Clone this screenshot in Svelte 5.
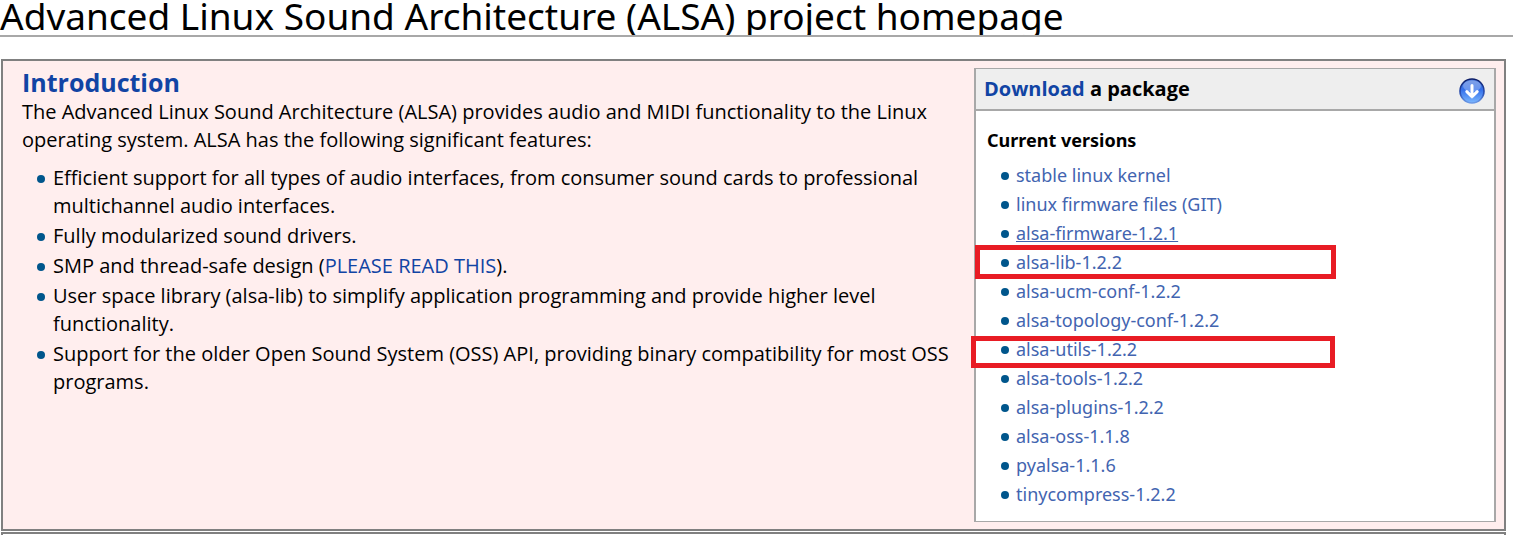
<script>
  const features = [
    { text: 'Efficient support for all types of audio interfaces, from consumer sound cards to professional multichannel audio interfaces.' },
    { text: 'Fully modularized sound drivers.' },
    { text: 'SMP and thread-safe design (', link: 'PLEASE READ THIS', after: ').' },
    { text: 'User space library (alsa-lib) to simplify application programming and provide higher level functionality.' },
    { text: 'Support for the older Open Sound System (OSS) API, providing binary compatibility for most OSS programs.' }
  ];

  const packages = [
    { name: 'stable linux kernel' },
    { name: 'linux firmware files (GIT)' },
    { name: 'alsa-firmware-1.2.1', active: true },
    { name: 'alsa-lib-1.2.2', mark: 'lib' },
    { name: 'alsa-ucm-conf-1.2.2' },
    { name: 'alsa-topology-conf-1.2.2' },
    { name: 'alsa-utils-1.2.2', mark: 'utils' },
    { name: 'alsa-tools-1.2.2' },
    { name: 'alsa-plugins-1.2.2' },
    { name: 'alsa-oss-1.1.8' },
    { name: 'pyalsa-1.1.6' },
    { name: 'tinycompress-1.2.2' }
  ];
</script>

<h1>Advanced Linux Sound Architecture (ALSA) project homepage</h1>

<main>
  <section class="intro">
    <div class="about">
      <h2><a href="#introduction">Introduction</a></h2>
      <p>
        The Advanced Linux Sound Architecture (ALSA) provides audio and MIDI functionality to the Linux
        operating system. ALSA has the following significant features:
      </p>
      <ul>
        {#each features as f}
          <li>{f.text}{#if f.link}<a href="#thread-safety">{f.link}</a>{f.after}{/if}</li>
        {/each}
      </ul>
    </div>

    <aside>
      <header>
        <h3><a href="#download">Download</a> a package</h3>
        <svg viewBox="0 0 26 26" width="26" height="26" aria-hidden="true">
          <defs>
            <linearGradient id="ball" x1="0" y1="0" x2="0" y2="1">
              <stop offset="0" stop-color="#5580dc" />
              <stop offset="0.45" stop-color="#3470ea" />
              <stop offset="1" stop-color="#7cb8ff" />
            </linearGradient>
            <linearGradient id="rim" x1="0" y1="0" x2="0" y2="1">
              <stop offset="0" stop-color="#0b1c66" />
              <stop offset="0.6" stop-color="#2a50b4" />
              <stop offset="1" stop-color="#6d9be8" />
            </linearGradient>
          </defs>
          <circle cx="13" cy="13" r="12" fill="url(#ball)" stroke="url(#rim)" stroke-width="1.6" />
          <ellipse cx="13" cy="8" rx="9" ry="5.5" fill="#fff" opacity="0.26" />
          <path d="M13 7.5v11M7.8 13.6l5.2 5.2 5.2-5.2" fill="none" stroke="#fff" stroke-width="3" stroke-linecap="round" stroke-linejoin="round" />
        </svg>
      </header>
      <div class="versions">
        <h4>Current versions</h4>
        <ul>
          {#each packages as p}
            <li>
              <a href="#{p.name}" class:active={p.active}>{p.name}</a>
              {#if p.mark}<span class="mark {p.mark}"></span>{/if}
            </li>
          {/each}
        </ul>
      </div>
    </aside>
  </section>
  <section class="next"></section>
</main>

<style>
  :global(body) {
    background: #fff;
    color: #000;
    font-family: 'Open Sans', 'Noto Sans', sans-serif;
    font-size: 20px;
    line-height: 28px;
  }

  h1, h2, h3, h4, p, ul {
    margin: 0;
    padding: 0;
  }

  a {
    color: #1144a4;
    text-decoration: none;
  }

  h1 {
    height: 35px;
    overflow: hidden;
    border-bottom: 2px solid #a8a8a8;
    font-family: 'Noto Sans', sans-serif;
    font-size: 37px;
    font-weight: 400;
    line-height: 32px;
    white-space: nowrap;
  }

  main {
    display: flex;
    flex-direction: column;
    gap: 1px;
    margin: 22px 7px 0 1px;
  }

  .intro {
    display: grid;
    grid-template-columns: minmax(0, 1fr) 522px;
    padding: 7px 8px;
    border: 2px solid #808080;
    background: #ffeeee;
  }

  .about {
    padding: 0 12px 0 11px;
  }

  h2 {
    font-size: 25px;
    line-height: 28px;
  }

  ul {
    list-style: none;
  }

  .about ul {
    display: flex;
    flex-direction: column;
    gap: 2px;
    margin-top: 10px;
  }

  .about p {
    margin-top: 2px;
  }

  li {
    position: relative;
  }

  .about li {
    padding-left: 31px;
  }

  li::before {
    content: '';
    position: absolute;
    top: 11px;
    left: 15px;
    width: 8px;
    height: 8px;
    border-radius: 50%;
    background: #00568c;
  }

  aside {
    border: 1px solid #a8a8a8;
    border-width: 1px 2px;
    background: #fff;
  }

  header {
    display: flex;
    align-items: center;
    justify-content: space-between;
    height: 40px;
    padding: 0 9px 0 8px;
    border-bottom: 2px solid #a8a8a8;
    background: #eee;
  }

  h3 {
    font-size: 20px;
  }

  header svg {
    margin-top: 3px;
  }

  .versions {
    padding: 15px 11px 12px;
    font-family: 'Noto Sans', sans-serif;
  }

  h4 {
    font-size: 18px;
  }

  .versions ul {
    margin-top: 7px;
  }

  .versions li {
    padding-left: 29px;
    font-size: 18px;
    line-height: 29px;
  }

  .versions li a {
    color: #4264b0;
  }

  .versions a.active {
    text-decoration: underline;
  }

  .versions li::before {
    left: 14px;
  }

  .mark {
    position: absolute;
    box-sizing: border-box;
    border: 5px solid #e81c24;
  }

  .lib {
    top: -3px;
    left: -12px;
    width: 361px;
    height: 34px;
  }

  .utils {
    top: 1px;
    left: -16px;
    width: 364px;
    height: 32px;
  }

  .next {
    height: 1px;
    border: 2px solid #808080;
    border-bottom: 0;
  }
</style>
